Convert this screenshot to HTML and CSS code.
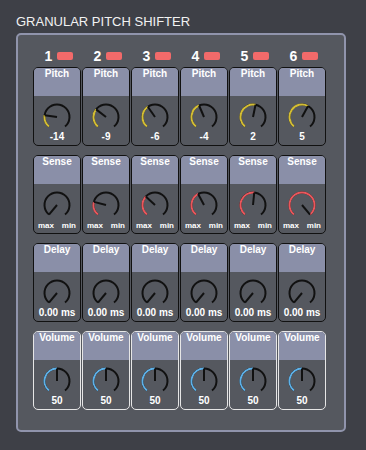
FILE: index.html
```html
<!DOCTYPE html>
<html lang="en">

<head>
    <meta charset="UTF-8">
    <meta name="viewport" content="width=device-width, initial-scale=1.0">
    <link rel="stylesheet" href="styles.css">
</head>

<body>

    <div class="title">GRANULAR PITCH SHIFTER</div>

    <div class="panel">
        <div class="row channels">
            <div class="channel"><span class="num">1</span><span class="led"></span></div>
            <div class="channel"><span class="num">2</span><span class="led"></span></div>
            <div class="channel"><span class="num">3</span><span class="led"></span></div>
            <div class="channel"><span class="num">4</span><span class="led"></span></div>
            <div class="channel"><span class="num">5</span><span class="led"></span></div>
            <div class="channel"><span class="num">6</span><span class="led"></span></div>
        </div>

        <div class="row">
            <div class="cell"><div class="cell-head">Pitch</div><div class="cell-body"><div class="knob" data-kind="pitch" data-value="0.208"></div><div class="value">-14</div></div></div>
            <div class="cell"><div class="cell-head">Pitch</div><div class="cell-body"><div class="knob" data-kind="pitch" data-value="0.3125"></div><div class="value">-9</div></div></div>
            <div class="cell"><div class="cell-head">Pitch</div><div class="cell-body"><div class="knob" data-kind="pitch" data-value="0.375"></div><div class="value">-6</div></div></div>
            <div class="cell"><div class="cell-head">Pitch</div><div class="cell-body"><div class="knob" data-kind="pitch" data-value="0.417"></div><div class="value">-4</div></div></div>
            <div class="cell"><div class="cell-head">Pitch</div><div class="cell-body"><div class="knob" data-kind="pitch" data-value="0.542"></div><div class="value">2</div></div></div>
            <div class="cell"><div class="cell-head">Pitch</div><div class="cell-body"><div class="knob" data-kind="pitch" data-value="0.604"></div><div class="value">5</div></div></div>
        </div>

        <div class="row">
            <div class="cell"><div class="cell-head">Sense</div><div class="cell-body"><div class="knob" data-kind="sense" data-value="0"></div><div class="range"><span>max</span><span>min</span></div></div></div>
            <div class="cell"><div class="cell-head">Sense</div><div class="cell-body"><div class="knob" data-kind="sense" data-value="0.23"></div><div class="range"><span>max</span><span>min</span></div></div></div>
            <div class="cell"><div class="cell-head">Sense</div><div class="cell-body"><div class="knob" data-kind="sense" data-value="0.33"></div><div class="range"><span>max</span><span>min</span></div></div></div>
            <div class="cell"><div class="cell-head">Sense</div><div class="cell-body"><div class="knob" data-kind="sense" data-value="0.40"></div><div class="range"><span>max</span><span>min</span></div></div></div>
            <div class="cell"><div class="cell-head">Sense</div><div class="cell-body"><div class="knob" data-kind="sense" data-value="0.52"></div><div class="range"><span>max</span><span>min</span></div></div></div>
            <div class="cell"><div class="cell-head">Sense</div><div class="cell-body"><div class="knob" data-kind="sense" data-value="1"></div><div class="range"><span>max</span><span>min</span></div></div></div>
        </div>

        <div class="row">
            <div class="cell"><div class="cell-head">Delay</div><div class="cell-body"><div class="knob" data-kind="delay" data-value="0"></div><div class="value">0.00 ms</div></div></div>
            <div class="cell"><div class="cell-head">Delay</div><div class="cell-body"><div class="knob" data-kind="delay" data-value="0"></div><div class="value">0.00 ms</div></div></div>
            <div class="cell"><div class="cell-head">Delay</div><div class="cell-body"><div class="knob" data-kind="delay" data-value="0"></div><div class="value">0.00 ms</div></div></div>
            <div class="cell"><div class="cell-head">Delay</div><div class="cell-body"><div class="knob" data-kind="delay" data-value="0"></div><div class="value">0.00 ms</div></div></div>
            <div class="cell"><div class="cell-head">Delay</div><div class="cell-body"><div class="knob" data-kind="delay" data-value="0"></div><div class="value">0.00 ms</div></div></div>
            <div class="cell"><div class="cell-head">Delay</div><div class="cell-body"><div class="knob" data-kind="delay" data-value="0"></div><div class="value">0.00 ms</div></div></div>
        </div>

        <div class="row last">
            <div class="cell volume"><div class="cell-head">Volume</div><div class="cell-body"><div class="knob" data-kind="volume" data-value="0.5"></div><div class="value">50</div></div></div>
            <div class="cell volume"><div class="cell-head">Volume</div><div class="cell-body"><div class="knob" data-kind="volume" data-value="0.5"></div><div class="value">50</div></div></div>
            <div class="cell volume"><div class="cell-head">Volume</div><div class="cell-body"><div class="knob" data-kind="volume" data-value="0.5"></div><div class="value">50</div></div></div>
            <div class="cell volume"><div class="cell-head">Volume</div><div class="cell-body"><div class="knob" data-kind="volume" data-value="0.5"></div><div class="value">50</div></div></div>
            <div class="cell volume"><div class="cell-head">Volume</div><div class="cell-body"><div class="knob" data-kind="volume" data-value="0.5"></div><div class="value">50</div></div></div>
            <div class="cell volume"><div class="cell-head">Volume</div><div class="cell-body"><div class="knob" data-kind="volume" data-value="0.5"></div><div class="value">50</div></div></div>
        </div>
    </div>

    <script src="script.js"></script>

</body>

</html>
```

FILE: styles.css
```css
body {
    margin: 0;
    padding: 14px 16px 0 16px;
    background-color: #3e4047;
    font-family: "Liberation Sans", Arial, sans-serif;
    color: #fff;
    height: 100vh;
    box-sizing: border-box;
}

.title {
    font-size: 13px;
    line-height: 15px;
    color: #f2f2f2;
}

.panel {
    width: 330px;
    box-sizing: border-box;
    margin-top: 4px;
    padding: 13px 15px 20px 15px;
    background-color: #55585f;
    border: 2px solid #9094ac;
    border-radius: 5px;
}

.row {
    display: grid;
    grid-template-columns: repeat(6, 48px);
    column-gap: 1px;
    margin-bottom: 9px;
}

.row.last {
    margin-bottom: 0;
}

.channels {
    height: 16px;
    margin-bottom: 3px;
}

.channel {
    display: flex;
    align-items: center;
    justify-content: center;
    gap: 5px;
    padding-left: 4px;
}

.num {
    font-size: 14px;
    line-height: 16px;
    font-weight: bold;
}

.led {
    width: 16px;
    height: 8px;
    border-radius: 2px;
    background-color: #f26a6a;
}

.cell {
    height: 79px;
    box-sizing: border-box;
    border: 1px solid #111;
    border-radius: 5px;
    overflow: hidden;
    background-color: #55585f;
}

.cell.volume {
    border-color: #e6e6e6;
}

.cell-head {
    height: 28px;
    background-color: #8a8fa8;
    text-align: center;
    font-size: 10px;
    line-height: 12px;
    font-weight: bold;
}

.cell-body {
    display: flex;
    flex-direction: column;
    align-items: center;
    padding-top: 7px;
}

.knob {
    width: 28px;
    height: 28px;
}

.knob svg {
    display: block;
}

.value {
    font-size: 10px;
    line-height: 12px;
    font-weight: bold;
    white-space: nowrap;
}

.range {
    align-self: stretch;
    display: flex;
    justify-content: space-between;
    padding: 1px 4px 0 4px;
    font-size: 8px;
    line-height: 12px;
    font-weight: bold;
}
```

FILE: script.js
```js
var R = 12.5;
var START = -140;
var SWEEP = 280;
var colors = {
    pitch: '#d3bd35',
    sense: '#e9575c',
    delay: '#d3bd35',
    volume: '#5eb1e8'
};

function point(deg) {
    var a = deg * Math.PI / 180;
    return (14 + R * Math.sin(a)).toFixed(2) + ' ' + (14 - R * Math.cos(a)).toFixed(2);
}

function arc(from, to) {
    var large = (to - from) > 180 ? 1 : 0;
    return 'M' + point(from) + ' A' + R + ' ' + R + ' 0 ' + large + ' 1 ' + point(to);
}

document.querySelectorAll('.knob').forEach(function (knob) {
    var value = parseFloat(knob.dataset.value);
    var angle = START + SWEEP * value;
    var svg = '<svg width="28" height="28" viewBox="0 0 28 28">';
    svg += '<path d="' + arc(START, START + SWEEP) + '" fill="none" stroke="#111" stroke-width="2"/>';
    if (value > 0) {
        svg += '<path d="' + arc(START, angle) + '" fill="none" stroke="' + colors[knob.dataset.kind] + '" stroke-width="2"/>';
    }
    svg += '<path d="M14 14 L' + point(angle) + '" stroke="#111" stroke-width="2"/>';
    svg += '</svg>';
    knob.innerHTML = svg;
});
```
